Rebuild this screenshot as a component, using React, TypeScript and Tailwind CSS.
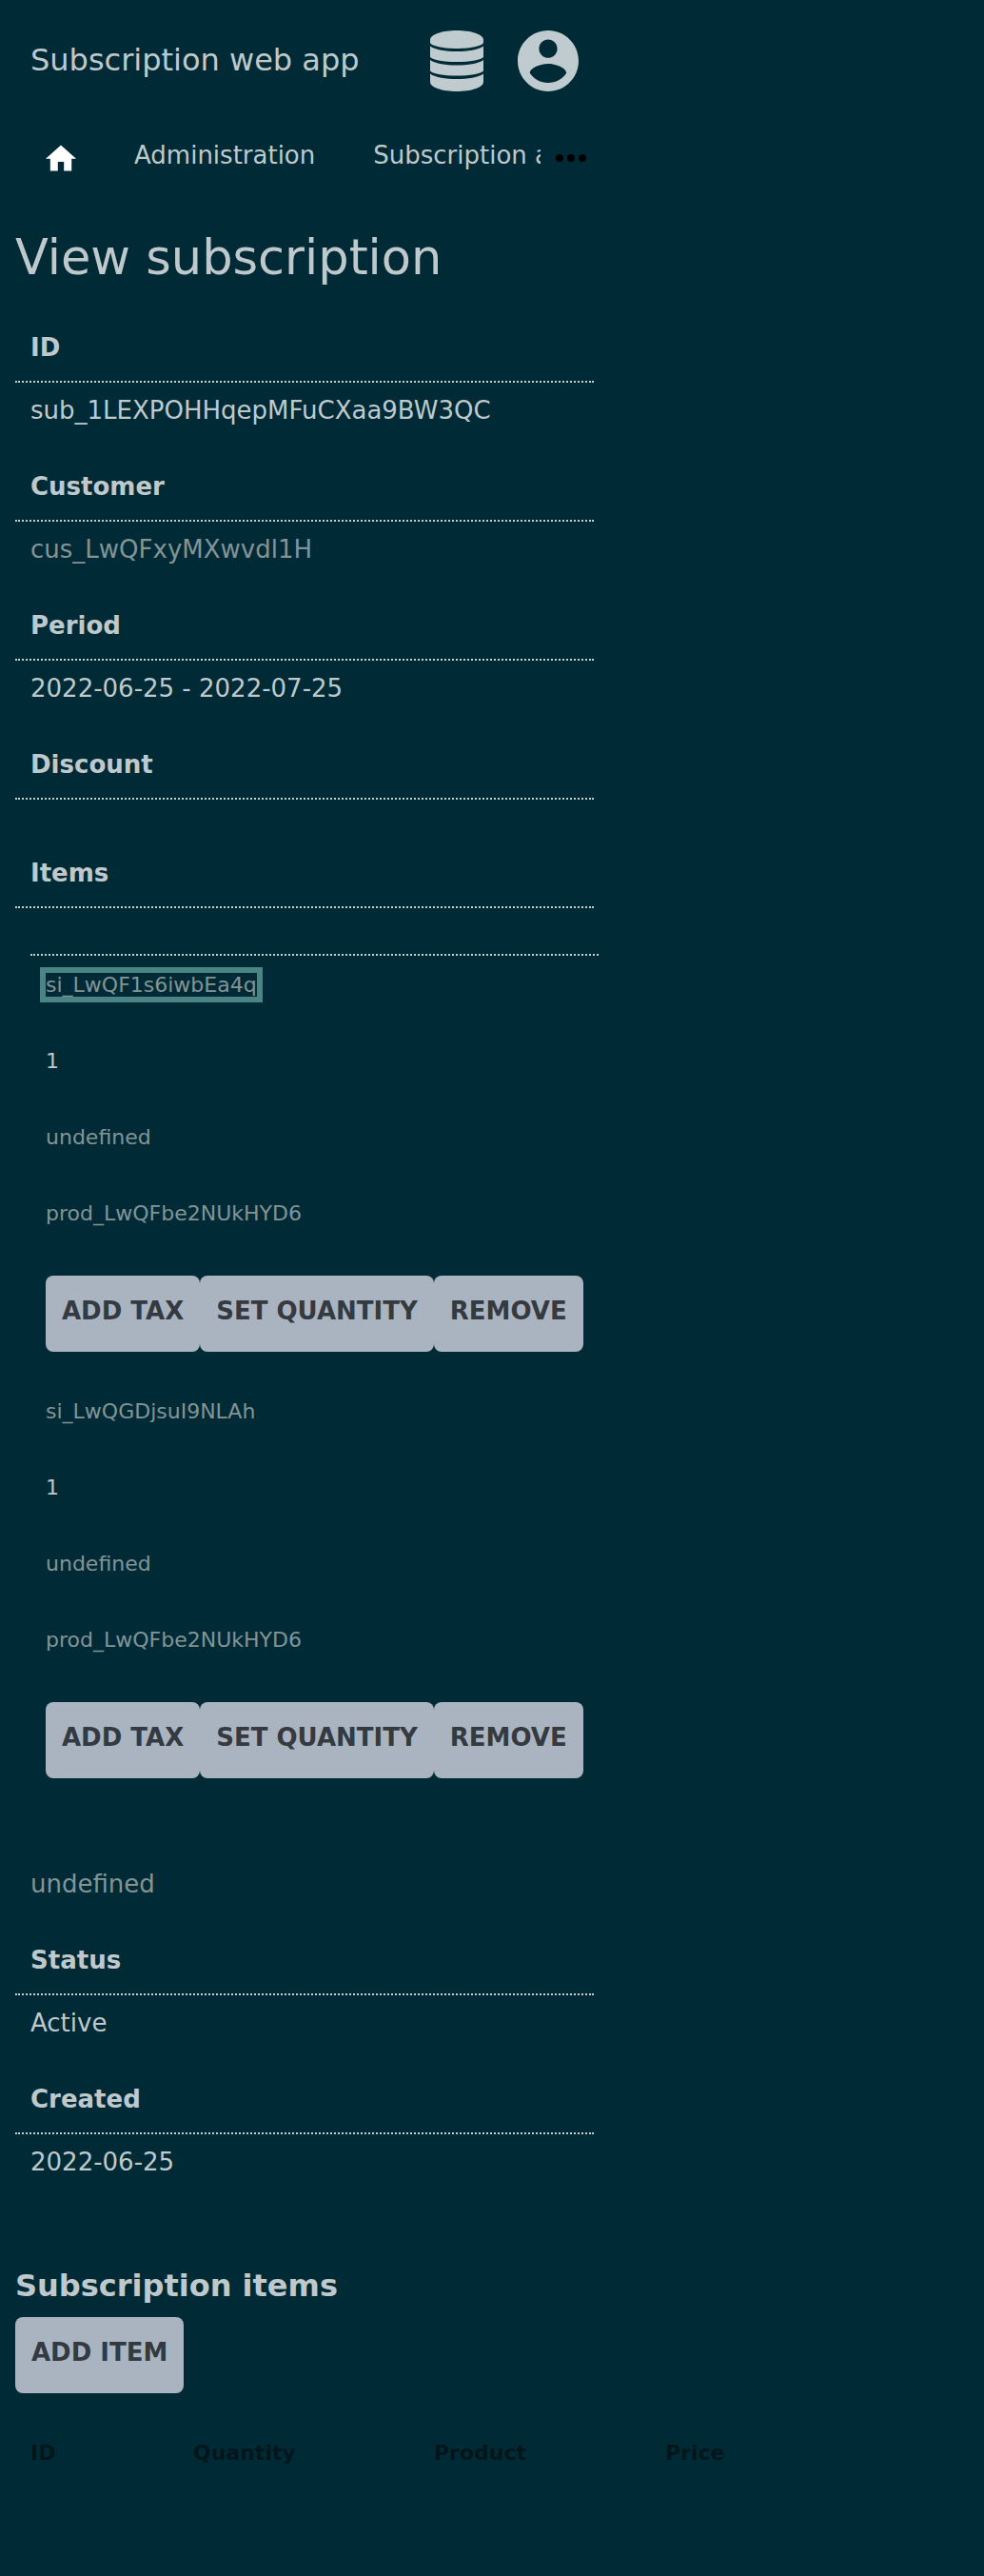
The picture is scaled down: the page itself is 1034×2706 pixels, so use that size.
import type { ReactNode } from "react";

function DatabaseIcon() {
  return (
    <svg viewBox="0 0 56 64" className="h-16 w-14" fill="currentColor" aria-hidden="true">
      <path d="M28 0C43 0 56 4 56 10v2.500C56 16 43 19 28 19S0 16 0 12.500V10C0 4 13 0 28 0Z" />
      <path d="M0 16.500C6 20.500 16 22 28 22s22-1.500 28-5.500V28C52 31.500 42 33 28 33S4 31.500 0 28Z" />
      <path d="M0 31C6 35 16 36.500 28 36.500S50 35 56 31V42.500C52 46 42 47.500 28 47.500S4 46 0 42.500Z" />
      <path d="M0 45.500C6 49.500 16 51 28 51s22-1.500 28-5.500V54c0 6-13 10-28 10S0 60 0 54Z" />
    </svg>
  );
}

function AccountIcon() {
  return (
    <svg viewBox="2 2 20 20" className="h-16 w-16" fill="currentColor" aria-hidden="true">
      <path d="M12 2C6.480 2 2 6.480 2 12s4.480 10 10 10 10-4.480 10-10S17.520 2 12 2zm0 3c1.660 0 3 1.340 3 3s-1.340 3-3 3-3-1.340-3-3 1.340-3 3-3zm0 14.200c-2.500 0-4.710-1.280-6-3.220.03-1.990 4-3.080 6-3.080 1.990 0 5.970 1.090 6 3.080-1.290 1.940-3.500 3.220-6 3.220z" />
    </svg>
  );
}

function HomeIcon() {
  return (
    <svg viewBox="2 3 20 17" className="h-7 w-8" fill="currentColor" aria-hidden="true">
      <path d="M10 20v-6h4v6h5v-8h3L12 3 2 12h3v8z" />
    </svg>
  );
}

function MoreIcon() {
  return (
    <svg viewBox="0 0 24 24" className="h-12 w-12" fill="currentColor" aria-hidden="true">
      <circle cx="6" cy="12" r="2" />
      <circle cx="12" cy="12" r="2" />
      <circle cx="18" cy="12" r="2" />
    </svg>
  );
}

function Button({ children }: { children: ReactNode }) {
  return (
    <button
      type="button"
      className="shrink-0 cursor-pointer rounded-lg bg-[#a9b4c0] px-[17px] pt-[21px] pb-[27px] font-bold whitespace-nowrap text-[#343a40] uppercase"
    >
      {children}
    </button>
  );
}

function Field({ label, children }: { label: string; children?: ReactNode }) {
  return (
    <div>
      <dt className="border-b-2 border-dotted border-[#c5d0d0] px-4 pt-6 pb-[19px] font-bold">{label}</dt>
      <dd className="px-4 pt-[13px] pb-6">{children}</dd>
    </div>
  );
}

function Muted({ children, focused = false }: { children: string; focused?: boolean }) {
  return (
    <a
      href="#"
      className={
        focused
          ? "text-[#839496] outline-[6px] outline-[#4a8484] outline-solid"
          : "text-[#839496]"
      }
    >
      {children}
    </a>
  );
}

const items = [
  { id: "si_LwQF1s6iwbEa4q", quantity: 1, price: "undefined", product: "prod_LwQFbe2NUkHYD6", focused: true },
  { id: "si_LwQGDjsuI9NLAh", quantity: 1, price: "undefined", product: "prod_LwQFbe2NUkHYD6", focused: false },
];

function ItemList() {
  return (
    <ul className="mt-[35px] w-max border-t-2 border-dotted border-[#c5d0d0] px-4">
      {items.map((item) => (
        <li key={item.id}>
          <div className="text-[22px] leading-[26px]">
            <div className="h-20 pt-[18px]">
              <Muted focused={item.focused}>{item.id}</Muted>
            </div>
            <div className="h-20 pt-[18px]">{item.quantity}</div>
            <div className="h-20 pt-[18px]">
              <Muted>{item.price}</Muted>
            </div>
            <div className="h-20 pt-[18px]">
              <Muted>{item.product}</Muted>
            </div>
          </div>
          <div className="flex pt-4 pb-8">
            <Button>Add tax</Button>
            <Button>Set quantity</Button>
            <Button>Remove</Button>
          </div>
        </li>
      ))}
    </ul>
  );
}

export default function App() {
  return (
    <div className="min-h-screen bg-[#002b36] font-['DejaVu_Sans',sans-serif] text-[26px] leading-8 text-[#bfc9cc]">
      <header className="max-w-[640px]">
        <div className="flex h-32 items-center gap-8 px-8">
          <a href="#" className="flex-1 pb-0.5 text-[32px] leading-10 whitespace-nowrap">
            Subscription web app
          </a>
          <a href="#" aria-label="Administrator" className="flex w-16 justify-center text-[#bfcbce]">
            <DatabaseIcon />
          </a>
          <a href="#" aria-label="Account" className="text-[#bfcbce]">
            <AccountIcon />
          </a>
        </div>
        <nav className="flex h-[76px] items-center pr-4 pl-12">
          <div className="flex flex-1 items-center gap-[61px] overflow-hidden whitespace-nowrap">
            <a href="#" aria-label="Home" className="shrink-0 text-white">
              <HomeIcon />
            </a>
            <a href="#" className="pb-1.5">Administration</a>
            <a href="#" className="pb-1.5">Subscription administration</a>
          </div>
          <button type="button" aria-label="More" className="ml-2 cursor-pointer text-black">
            <MoreIcon />
          </button>
        </nav>
      </header>

      <main className="px-4">
        <h1 className="pt-[37px] text-[51px] leading-[60px]">View subscription</h1>

        <dl className="mt-6 max-w-[608px]">
          <Field label="ID">sub_1LEXPOHHqepMFuCXaa9BW3QC</Field>
          <Field label="Customer">
            <Muted>cus_LwQFxyMXwvdl1H</Muted>
          </Field>
          <Field label="Period">2022-06-25 - 2022-07-25</Field>
          <Field label="Discount" />
          <Field label="Items">
            <ItemList />
            <div className="pt-[63px]">
              <Muted>undefined</Muted>
            </div>
          </Field>
          <Field label="Status">Active</Field>
          <Field label="Created">2022-06-25</Field>
        </dl>

        <h2 className="mt-[70px] mb-[13px] text-[32px] leading-10 font-bold">Subscription items</h2>
        <Button>Add item</Button>
        <table className="mt-[34px] w-full text-left text-[22px] leading-[26px] text-[#00161b]">
          <thead>
            <tr>
              <th className="w-[171px] p-4">ID</th>
              <th className="w-[253px] p-4">Quantity</th>
              <th className="w-[243px] p-4">Product</th>
              <th className="p-4">Price</th>
            </tr>
          </thead>
        </table>
      </main>
    </div>
  );
}
